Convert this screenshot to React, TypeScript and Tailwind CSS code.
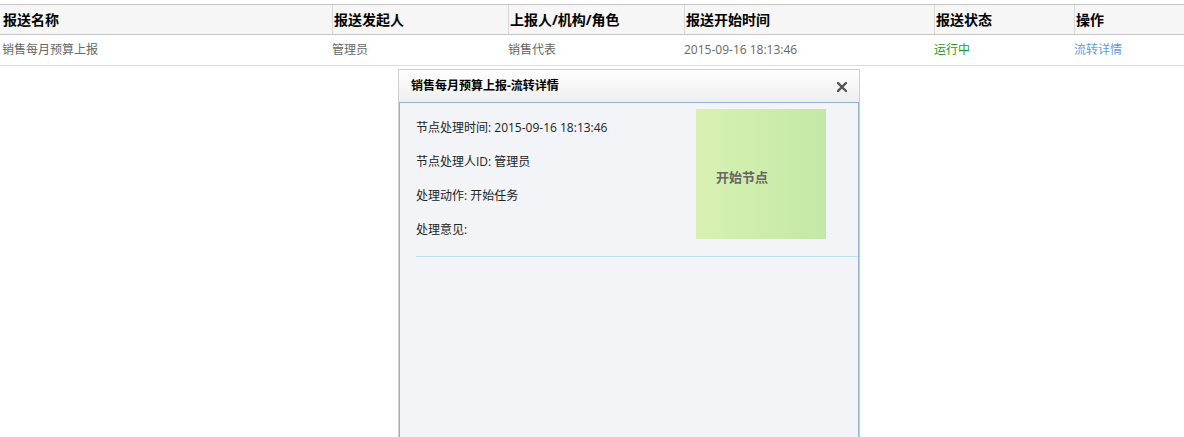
import React from "react";

const font = { fontFamily: '"Open Sans", "Noto Sans CJK SC", sans-serif' };

export default function App() {
  const headers = ["报送名称", "报送发起人", "上报人/机构/角色", "报送开始时间", "报送状态", "操作"];
  const grid = "grid grid-cols-[332px_176px_176px_250px_140px_1fr]";
  return (
    <div className="relative w-[1184px] h-[437px] bg-white overflow-hidden" style={font}>
      <div className="pt-[4px]">
        <div className={`${grid} h-[31px] border-t border-b border-[#c6c6c6] bg-[#f6f6f6]`}>
          {headers.map((h, i) => (
            <div
              key={h}
              className={`flex items-center text-[14px] font-bold text-black ${i > 0 ? "border-l border-[#d8d8d8] pl-[1px]" : "pl-[3px]"}`}
            >
              {h}
            </div>
          ))}
        </div>
        <div className={`${grid} h-[31px] border-b border-[#dcdcdc] text-[12px] text-[#666]`}>
          <div className="flex items-center pl-[2px]">销售每月预算上报</div>
          <div className="flex items-center">管理员</div>
          <div className="flex items-center">销售代表</div>
          <div className="flex items-center">2015-09-16 18:13:46</div>
          <div className="flex items-center text-[#1a9a1a]">运行中</div>
          <div className="flex items-center text-[#5f9be6]">流转详情</div>
        </div>
      </div>

      <div className="absolute left-[398px] top-[69px] w-[462px] h-[380px] border border-[#cfcfcf] flex flex-col">
        <div className="h-[32px] shrink-0 flex items-center justify-between pl-[12px] pr-[12px] bg-gradient-to-b from-[#ffffff] to-[#eeeeee]">
          <span className="text-[12px] font-bold text-black">销售每月预算上报-流转详情</span>
          <svg width="10" height="10" viewBox="0 0 10 10" className="mt-[2px]">
            <path d="M1 1 L9 9 M9 1 L1 9" stroke="#555" strokeWidth="2.4" strokeLinecap="square" />
          </svg>
        </div>
        <div className="flex-1 bg-[#f3f4f8] border-t border-l border-r border-[#8ab3d6]">
          <div className="pt-[6px] pl-[16px]">
            <div className="flex h-[130px]">
              <div className="w-[280px] pt-[2px] text-[12px] text-[#222] leading-[34px]">
                <div>节点处理时间: 2015-09-16 18:13:46</div>
                <div>节点处理人ID: 管理员</div>
                <div>处理动作: 开始任务</div>
                <div>处理意见:</div>
              </div>
              <div className="w-[130px] h-[130px] bg-gradient-to-r from-[#d8f1b2] to-[#c3e8a6] flex items-center pl-[20px] pt-[8px]">
                <span className="text-[13px] font-bold text-[#666]">开始节点</span>
              </div>
            </div>
            <div className="mt-[17px] h-px bg-[#bde0f0]"></div>
          </div>
        </div>
      </div>
    </div>
  );
}
